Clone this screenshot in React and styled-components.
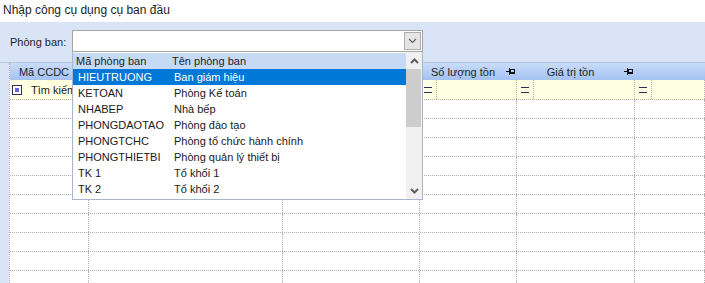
import React from 'react';
import styled, { createGlobalStyle } from 'styled-components';

const columns = [79, 194, 137, 97, 118, 0];
const headers = ['Mã CCDC', '', '', 'Số lượng tồn', 'Giá trị tồn', ''];

const departments = [
  ['HIEUTRUONG', 'Ban giám hiệu'],
  ['KETOAN', 'Phòng Kế toán'],
  ['NHABEP', 'Nhà bếp'],
  ['PHONGDAOTAO', 'Phòng đào tạo'],
  ['PHONGTCHC', 'Phòng tổ chức hành chính'],
  ['PHONGTHIETBI', 'Phòng quản lý thiết bị'],
  ['TK 1', 'Tổ khối 1'],
  ['TK 2', 'Tổ khối 2'],
];

const GlobalStyle = createGlobalStyle`
  html, body {
    margin: 0;
    padding: 0;
  }
  body {
    width: 705px;
    height: 283px;
    overflow: hidden;
    background: #fff;
    font-family: "Liberation Sans", Arial, sans-serif;
    font-size: 11px;
    color: #1b1b1b;
  }
`;

function PinIcon() {
  return (
    <svg width="10" height="7" viewBox="0 0 10 7" shapeRendering="crispEdges">
      <path d="M0 3.5H4M3.5 0V7" stroke="#111" strokeWidth="1" fill="none" />
      <rect x="4.5" y="1.5" width="4" height="3" stroke="#111" fill="none" />
      <path d="M4 5.5H9" stroke="#111" strokeWidth="1" />
    </svg>
  );
}

function Chevron({ up, thin }) {
  return (
    <svg width="9" height="6" viewBox="0 0 9 6">
      <polyline
        points={up ? '1,5 4.5,1.5 8,5' : '1,1 4.5,4.5 8,1'}
        fill="none"
        stroke="#5f5f5f"
        strokeWidth={thin ? 1.1 : 2}
      />
    </svg>
  );
}

function App() {
  return (
    <Window>
      <GlobalStyle />
      <Title>Nhập công cụ dụng cụ ban đầu</Title>
      <Panel>
        <FilterBar>
          <Label>Phòng ban:</Label>
          <Combo>
            <ComboButton>
              <Chevron thin />
            </ComboButton>
          </Combo>
        </FilterBar>
        <Grid>
          <HeaderRow>
            {columns.map((w, i) => (
              <HeaderCell key={i} w={w}>
                <HeaderText>{headers[i]}</HeaderText>
                {i < 5 && <PinIcon />}
              </HeaderCell>
            ))}
          </HeaderRow>
          <FilterRow>
            {columns.map((w, i) =>
              i === 0 ? (
                <FilterCell key={i} w={w}>
                  <SearchBox />
                  <SearchText>Tìm kiếm</SearchText>
                </FilterCell>
              ) : (
                <FilterCell key={i} w={w}>
                  <Operator>
                    <Equals />
                  </Operator>
                </FilterCell>
              )
            )}
          </FilterRow>
          {Array.from({ length: 10 }).map((_, r) => (
            <Row key={r}>
              {columns.map((w, i) => (
                <Cell key={i} w={w} />
              ))}
            </Row>
          ))}
        </Grid>
      </Panel>

      <Dropdown>
        <List>
          <ListHeader>
            <CodeCol header>Mã phòng ban</CodeCol>
            <NameCol header>Tên phòng ban</NameCol>
          </ListHeader>
          {departments.map(([code, name], i) => (
            <ListRow key={code} selected={i === 0}>
              <CodeCol>{code}</CodeCol>
              <NameCol>{name}</NameCol>
            </ListRow>
          ))}
        </List>
        <ScrollBar>
          <ScrollArrow>
            <Chevron up />
          </ScrollArrow>
          <Thumb />
          <ScrollSpace />
          <ScrollArrow>
            <Chevron />
          </ScrollArrow>
        </ScrollBar>
      </Dropdown>
    </Window>
  );
}

const Window = styled.div`
  position: relative;
  width: 705px;
  height: 283px;
  display: flex;
  flex-direction: column;
  overflow: hidden;
`;

const Title = styled.div`
  height: 22px;
  padding-left: 3px;
  font-size: 12px;
  line-height: 20px;
  color: #1e1e1e;
  background: #fff;
`;

const Panel = styled.div`
  flex: 1;
  display: flex;
  flex-direction: column;
  background: #d9e5f7;
  min-height: 0;
`;

const FilterBar = styled.div`
  height: 41px;
  display: flex;
  align-items: flex-start;
  padding-left: 10px;
  box-sizing: border-box;
  border-bottom: 1px solid #b6c5da;
`;

const Label = styled.div`
  width: 62px;
  margin-top: 14px;
  line-height: 13px;
  color: #1e1e1e;
`;

const Combo = styled.div`
  width: 351px;
  height: 22px;
  margin-top: 8px;
  box-sizing: border-box;
  border: 1px solid #a5a5a5;
  background: #fff;
  display: flex;
  justify-content: flex-end;
  align-items: center;
  padding-right: 1px;
`;

const ComboButton = styled.div`
  width: 17px;
  height: 18px;
  box-sizing: border-box;
  border: 1px solid #adadad;
  background: #e5e5e5;
  display: flex;
  align-items: center;
  justify-content: center;
`;

const Grid = styled.div`
  flex: 1;
  margin-left: 9px;
  background: #fff;
  border-left: 1px dotted #b0b0b0;
  overflow: hidden;
`;

const HeaderRow = styled.div`
  display: flex;
  height: 17px;
  background: linear-gradient(#cadcf9, #a3c2f2);
`;

const HeaderCell = styled.div`
  ${(p) => (p.w ? `width: ${p.w}px;` : 'flex: 1;')}
  flex-shrink: 0;
  display: flex;
  align-items: center;
  padding-right: 1px;
  box-sizing: border-box;
`;

const HeaderText = styled.span`
  flex: 1;
  text-align: center;
  white-space: nowrap;
  color: #1e1e1e;
`;

const FilterRow = styled.div`
  display: flex;
  height: 20px;
  background: #ffffe1;
  border-bottom: 1px dotted #b0b0b0;
  box-sizing: border-box;
`;

const FilterCell = styled.div`
  ${(p) => (p.w ? `width: ${p.w}px;` : 'flex: 1;')}
  flex-shrink: 0;
  display: flex;
  align-items: center;
  box-sizing: border-box;
  border-right: 1px dotted #b0b0b0;
  white-space: nowrap;
  overflow: hidden;
`;

const SearchBox = styled.span`
  width: 10px;
  height: 10px;
  margin-left: 2px;
  box-sizing: border-box;
  border: 1px solid #2f2f5f;
  background: #fff;
  padding: 2px;
  flex-shrink: 0;

  &::after {
    content: '';
    display: block;
    width: 4px;
    height: 4px;
    background: #6666d4;
  }
`;

const SearchText = styled.span`
  margin-left: 9px;
  color: #1e1e1e;
`;

const Operator = styled.div`
  width: 17px;
  height: 100%;
  box-sizing: border-box;
  border-right: 1px dotted #b0b0b0;
  display: flex;
  align-items: center;
  padding-left: 4px;
`;

const Equals = styled.span`
  width: 8px;
  height: 4px;
  border-top: 1px solid #2d2d5a;
  border-bottom: 1px solid #2d2d5a;
  margin-top: 1px;
`;

const Row = styled.div`
  display: flex;
  height: 19px;
  border-bottom: 1px dotted #b0b0b0;
  box-sizing: border-box;
`;

const Cell = styled.div`
  ${(p) => (p.w ? `width: ${p.w}px;` : 'flex: 1;')}
  flex-shrink: 0;
  box-sizing: border-box;
  border-right: 1px dotted #b0b0b0;
`;

const Dropdown = styled.div`
  position: absolute;
  left: 72px;
  top: 52px;
  width: 351px;
  height: 148px;
  box-sizing: border-box;
  border: 1px solid #a9b5c8;
  border-top: none;
  background: #fff;
  display: flex;
`;

const List = styled.div`
  flex: 1;
  display: flex;
  flex-direction: column;
  padding-top: 1px;
`;

const ListHeader = styled.div`
  display: flex;
  height: 16px;
  align-items: center;
  background: #c6daf5;
  color: #1e1e1e;
`;

const ListRow = styled.div`
  display: flex;
  height: 16px;
  align-items: center;
  background: ${(p) => (p.selected ? '#0078d7' : '#fff')};
  color: ${(p) => (p.selected ? '#fff' : '#1a1a1a')};
`;

const CodeCol = styled.span`
  width: 96px;
  padding-left: ${(p) => (p.header ? 3 : 5)}px;
  box-sizing: border-box;
  white-space: nowrap;
`;

const NameCol = styled.span`
  padding-left: ${(p) => (p.header ? 3 : 5)}px;
  white-space: nowrap;
`;

const ScrollBar = styled.div`
  width: 16px;
  background: #f0f0f0;
  display: flex;
  flex-direction: column;
  padding-top: 1px;
`;

const ScrollArrow = styled.div`
  height: 16px;
  display: flex;
  align-items: center;
  justify-content: center;
`;

const Thumb = styled.div`
  height: 58px;
  margin: 0 1px 0 0;
  background: #cdcdcd;
`;

const ScrollSpace = styled.div`
  flex: 1;
`;

export default App;
